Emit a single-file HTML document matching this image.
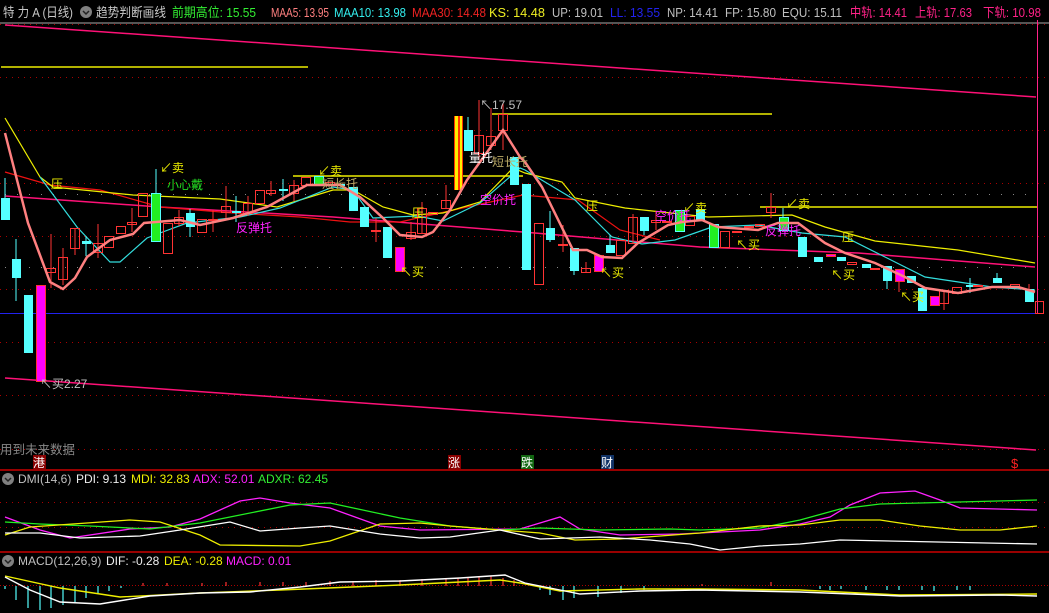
<!DOCTYPE html>
<html><head><meta charset="utf-8"><style>
html,body{margin:0;padding:0;background:#000;width:1049px;height:613px;overflow:hidden}
svg{display:block}
text{font-family:"Liberation Sans","Noto Sans CJK SC",sans-serif}
</style></head><body>
<svg width="1049" height="613" viewBox="0 0 1049 613" xmlns="http://www.w3.org/2000/svg">
<rect width="1049" height="613" fill="#000"/>
<!-- header -->
<g font-size="13">
<text x="3" y="17" fill="#c8c8c8" textLength="70" lengthAdjust="spacingAndGlyphs">特 力 A (日线)</text>
<text x="96" y="17" fill="#c8c8c8" textLength="70" lengthAdjust="spacingAndGlyphs">趋势判断画线</text>
<text x="172" y="17" fill="#33ee33" textLength="84" lengthAdjust="spacingAndGlyphs">前期高位: 15.55</text>
<text x="271" y="17" fill="#ff8080" textLength="58" lengthAdjust="spacingAndGlyphs">MAA5: 13.95</text>
<text x="334" y="17" fill="#33eeee" textLength="72" lengthAdjust="spacingAndGlyphs">MAA10: 13.98</text>
<text x="412" y="17" fill="#ee2222" textLength="74" lengthAdjust="spacingAndGlyphs">MAA30: 14.48</text>
<text x="489" y="17" fill="#eeee22" textLength="56" lengthAdjust="spacingAndGlyphs">KS: 14.48</text>
<text x="552" y="17" fill="#c0c0c0" textLength="51" lengthAdjust="spacingAndGlyphs">UP: 19.01</text>
<text x="610" y="17" fill="#2222ee" textLength="50" lengthAdjust="spacingAndGlyphs">LL: 13.55</text>
<text x="667" y="17" fill="#c0c0c0" textLength="51" lengthAdjust="spacingAndGlyphs">NP: 14.41</text>
<text x="725" y="17" fill="#c0c0c0" textLength="51" lengthAdjust="spacingAndGlyphs">FP: 15.80</text>
<text x="782" y="17" fill="#c0c0c0" textLength="60" lengthAdjust="spacingAndGlyphs">EQU: 15.11</text>
<text x="850" y="17" fill="#ff2288" textLength="57" lengthAdjust="spacingAndGlyphs">中轨: 14.41</text>
<text x="915" y="17" fill="#ff2288" textLength="57" lengthAdjust="spacingAndGlyphs">上轨: 17.63</text>
<text x="983" y="17" fill="#ff2288" textLength="58" lengthAdjust="spacingAndGlyphs">下轨: 10.98</text>
</g>
<circle cx="86" cy="12" r="6" fill="#808080"/><path d="M83 11l3 3 3-3" stroke="#222" stroke-width="1.5" fill="none"/>
<!-- main grid -->
<line x1="0" y1="23" x2="1049" y2="23" stroke="#aaa" stroke-width="1"/>
<g stroke="#a00" stroke-dasharray="1 5" stroke-width="1">
<line x1="0" y1="24.5" x2="1049" y2="24.5"/><line x1="0" y1="77.5" x2="1049" y2="77.5"/>
<line x1="0" y1="130.5" x2="1049" y2="130.5"/><line x1="0" y1="183.5" x2="1049" y2="183.5"/>
<line x1="0" y1="236.5" x2="1049" y2="236.5"/><line x1="0" y1="289.5" x2="1049" y2="289.5"/>
<line x1="0" y1="342.5" x2="1049" y2="342.5"/><line x1="0" y1="395.5" x2="1049" y2="395.5"/>
<line x1="0" y1="449.5" x2="1049" y2="449.5"/>
</g>
<g stroke="#888" stroke-dasharray="1 11" stroke-width="1">
<line x1="5" y1="194.5" x2="1049" y2="194.5"/><line x1="5" y1="267.5" x2="1049" y2="267.5"/>
</g>
<line x1="0" y1="313.5" x2="1037" y2="313.5" stroke="#2222ee"/>
<line x1="1037.5" y1="20" x2="1037.5" y2="313" stroke="#ff2288"/>
<!-- channel -->
<g stroke="#ff1177" stroke-width="1.5" fill="none">
<line x1="5" y1="25" x2="1036" y2="97"/>
<polyline points="5,196 160,207 333,217 523,232 700,247 858,253 1035,267"/>
<line x1="5" y1="378" x2="1036" y2="450"/>
</g>
<g stroke="#eeee00" stroke-width="1.5">
<line x1="1" y1="67" x2="308" y2="67"/>
<line x1="492" y1="114" x2="772" y2="114"/>
<line x1="293" y1="176" x2="523" y2="176"/>
<line x1="760" y1="207" x2="1037" y2="207"/>
</g>
<polyline fill="none" stroke="#ee1111" stroke-width="1.2" points="5,172 50,185 100,190 160,207 233,213 300,217 350,222 400,222 467,207 523,195 578,200 620,230 660,240"/>
<polyline fill="none" stroke="#eeee00" stroke-width="1.2" points="5,118 40,177 53,187 133,195 220,199 277,207 333,190 353,190 383,207 413,215 443,213 480,202 513,168 525,173 562,182 575,198 625,208 708,217 792,215 825,227 875,241 958,250 1035,263"/>
<polyline fill="none" stroke="#33dddd" stroke-width="1.2" points="40,177 77,227 110,262 120,262 147,238 160,233 187,223 240,217 280,208 333,187 353,190 373,218 417,216 443,221 480,203 520,168 525,170 575,200 612,237 642,244 675,240 712,227 758,225 802,233 845,237 885,257 925,277 992,287 1035,290"/>
<g stroke-width="1">
<g stroke="#ff3333">
<line x1="51" y1="234" x2="51" y2="288"/><line x1="63" y1="248" x2="63" y2="285"/><line x1="75" y1="228" x2="75" y2="255"/>
<line x1="98" y1="224" x2="98" y2="258"/><line x1="132" y1="208" x2="132" y2="232"/><line x1="179" y1="210" x2="179" y2="226"/>
<line x1="213" y1="210" x2="213" y2="232"/><line x1="226" y1="186" x2="226" y2="218"/><line x1="248" y1="196" x2="248" y2="216"/>
<line x1="271" y1="181" x2="271" y2="196"/><line x1="294" y1="180" x2="294" y2="201"/><line x1="376" y1="218" x2="376" y2="242"/>
<line x1="411" y1="222" x2="411" y2="240"/><line x1="422" y1="202" x2="422" y2="233"/><line x1="446" y1="185" x2="446" y2="208"/>
<line x1="479" y1="100" x2="479" y2="160"/><line x1="491" y1="108" x2="491" y2="150"/><line x1="503" y1="103" x2="503" y2="150"/>
<line x1="563" y1="225" x2="563" y2="252"/><line x1="586" y1="262" x2="586" y2="272"/><line x1="633" y1="214" x2="633" y2="243"/>
<line x1="656" y1="211" x2="656" y2="230"/><line x1="771" y1="193" x2="771" y2="218"/><line x1="899" y1="269" x2="899" y2="292"/>
<line x1="944" y1="290" x2="944" y2="310"/><line x1="1029" y1="284" x2="1029" y2="290"/>
</g>
<g stroke="#55ffff">
<line x1="5" y1="178" x2="5" y2="198"/><line x1="16" y1="239" x2="16" y2="301"/><line x1="86" y1="236" x2="86" y2="256"/>
<line x1="190" y1="209" x2="190" y2="237"/><line x1="236" y1="196" x2="236" y2="222"/><line x1="283" y1="179" x2="283" y2="201"/>
<line x1="468" y1="117" x2="468" y2="151"/><line x1="550" y1="211" x2="550" y2="242"/><line x1="574" y1="248" x2="574" y2="275"/>
<line x1="610" y1="235" x2="610" y2="253"/><line x1="644" y1="217" x2="644" y2="235"/><line x1="887" y1="266" x2="887" y2="289"/>
<line x1="997" y1="273" x2="997" y2="283"/><line x1="970" y1="278" x2="970" y2="293"/><line x1="156" y1="169" x2="156" y2="193"/><line x1="783" y1="208" x2="783" y2="217"/>
</g>
<g fill="#55ffff">
<rect x="1" y="198" width="9" height="22"/><rect x="12" y="259" width="9" height="19"/><rect x="24" y="295" width="9" height="58"/>
<rect x="82" y="241" width="9" height="3"/><rect x="186" y="213" width="9" height="14"/><rect x="232" y="211" width="9" height="2"/>
<rect x="279" y="189" width="9" height="2"/><rect x="349" y="187" width="9" height="24"/><rect x="360" y="207" width="9" height="20"/>
<rect x="383" y="227" width="9" height="31"/><rect x="464" y="130" width="9" height="21"/><rect x="510" y="157" width="9" height="28"/>
<rect x="522" y="184" width="9" height="86"/><rect x="546" y="228" width="9" height="12"/><rect x="570" y="248" width="9" height="23"/>
<rect x="606" y="245" width="9" height="8"/><rect x="640" y="217" width="9" height="14"/><rect x="696" y="209" width="9" height="12"/>
<rect x="798" y="237" width="9" height="20"/><rect x="814" y="257" width="9" height="5"/><rect x="837" y="257" width="9" height="4"/>
<rect x="862" y="264" width="9" height="4"/><rect x="883" y="266" width="9" height="15"/><rect x="907" y="276" width="9" height="7"/>
<rect x="918" y="288" width="9" height="23"/><rect x="966" y="285" width="9" height="2"/><rect x="993" y="278" width="9" height="5"/>
<rect x="1025" y="289" width="9" height="13"/><rect x="336" y="184" width="9" height="2"/>
</g>
<g fill="#ff00ff" stroke="#ff3333">
<rect x="36.5" y="285.5" width="9" height="96"/><rect x="395.5" y="247.5" width="9" height="24"/><rect x="594.5" y="255.5" width="9" height="16"/>
<rect x="826.5" y="254.5" width="9" height="2"/><rect x="895.5" y="269.5" width="9" height="12"/><rect x="930.5" y="296.5" width="9" height="9"/>
</g>
<g fill="#22ee22" stroke="#55ffff">
<rect x="151.5" y="193.5" width="9" height="48"/><rect x="314.5" y="176.5" width="9" height="9"/><rect x="675.5" y="210.5" width="9" height="21"/>
<rect x="709.5" y="224.5" width="9" height="23"/><rect x="779.5" y="217.5" width="9" height="13"/>
</g>
<g fill="none" stroke="#ff3333">
<rect x="46.5" y="268.5" width="9" height="4"/><rect x="58.5" y="257.5" width="9" height="22"/><rect x="70.5" y="228.5" width="9" height="20"/>
<rect x="93.5" y="243.5" width="9" height="9"/><rect x="104.5" y="236.5" width="9" height="11"/><rect x="116.5" y="226.5" width="9" height="7"/>
<rect x="127.5" y="222.5" width="9" height="2"/><rect x="138.5" y="193.5" width="9" height="23"/><rect x="163.5" y="223.5" width="9" height="30"/>
<rect x="174.5" y="217.5" width="9" height="6"/><rect x="197.5" y="219.5" width="9" height="13"/><rect x="208.5" y="219.5" width="9" height="1"/>
<rect x="221.5" y="206.5" width="9" height="6"/><rect x="243.5" y="203.5" width="9" height="10"/><rect x="255.5" y="190.5" width="9" height="13"/>
<rect x="266.5" y="190.5" width="9" height="3"/><rect x="289.5" y="185.5" width="9" height="8"/><rect x="301.5" y="177.5" width="9" height="8"/>
<rect x="325.5" y="182.5" width="9" height="2"/><rect x="371.5" y="230.5" width="9" height="1"/><rect x="406.5" y="232.5" width="9" height="6"/>
<rect x="417.5" y="208.5" width="9" height="25"/><rect x="428.5" y="212.5" width="9" height="2"/><rect x="441.5" y="200.5" width="9" height="8"/>
<rect x="474.5" y="135.5" width="9" height="18"/><rect x="486.5" y="136.5" width="9" height="9"/><rect x="498.5" y="114.5" width="9" height="16"/>
<rect x="534.5" y="223.5" width="9" height="61"/><rect x="558.5" y="244.5" width="9" height="1"/><rect x="581.5" y="268.5" width="9" height="4"/>
<rect x="616.5" y="240.5" width="9" height="15"/><rect x="628.5" y="217.5" width="9" height="26"/><rect x="651.5" y="220.5" width="9" height="2"/>
<rect x="662.5" y="221.5" width="9" height="1"/><rect x="685.5" y="216.5" width="9" height="9"/><rect x="720.5" y="231.5" width="9" height="16"/>
<rect x="744.5" y="226.5" width="9" height="1"/><rect x="755.5" y="224.5" width="9" height="2"/><rect x="766.5" y="207.5" width="9" height="5"/>
<rect x="847.5" y="262.5" width="9" height="2"/><rect x="870.5" y="268.5" width="9" height="1"/><rect x="939.5" y="290.5" width="9" height="13"/>
<rect x="952.5" y="287.5" width="9" height="6"/><rect x="973.5" y="285.5" width="9" height="1"/><rect x="1010.5" y="284.5" width="9" height="2"/>
<rect x="1035.5" y="301.5" width="8" height="12"/><rect x="732.5" y="231.5" width="9" height="1"/>
</g>
<rect x="454" y="116" width="9" height="74" fill="#ff3300"/><rect x="455" y="116" width="3" height="74" fill="#ffee00"/><rect x="460" y="116" width="2" height="74" fill="#ffee00"/>
</g>
<polyline fill="none" stroke="#ff8080" stroke-width="2.5" points="5,133 28,223 50,282 63,289 75,278 87,257 110,240 133,234 144,223 180,220 200,225 233,218 267,207 307,185 340,185 360,197 383,218 400,235 422,237 433,232 450,210 467,180 503,130 520,157 525,162 542,187 573,250 587,250 602,257 622,258 638,243 668,225 682,222 702,220 718,227 758,230 778,223 798,223 825,243 845,253 875,263 905,277 925,288 958,293 992,287 1018,287 1035,292"/>
<g font-size="12">
<text x="160" y="172" fill="#eeee00">↙卖</text>
<text x="167" y="189" fill="#22dd22">小心戴</text>
<text x="51" y="188" fill="#eeee00">压</text>
<text x="412" y="217" fill="#eeee00">压</text>
<text x="586" y="210" fill="#eeee00">压</text>
<text x="842" y="241" fill="#eeee00">压</text>
<text x="318" y="175" fill="#eeee00">↙卖</text>
<text x="683" y="212" fill="#eeee00">↙卖</text>
<text x="786" y="208" fill="#eeee00">↙卖</text>
<text x="400" y="276" fill="#eeee00">↖买</text>
<text x="600" y="277" fill="#eeee00">↖买</text>
<text x="736" y="249" fill="#eeee00">↖买</text>
<text x="831" y="279" fill="#eeee00">↖买</text>
<text x="900" y="301" fill="#eeee00">↖买</text>
<text x="40" y="388" fill="#c0c0c0">↖买2.27</text>
<text x="480" y="109" fill="#c0c0c0">↖17.57</text>
<text x="236" y="232" fill="#ff22ff">反弹托</text>
<text x="480" y="204" fill="#ff22ff">空价托</text>
<text x="655" y="220" fill="#ff22ff">空价托</text>
<text x="765" y="235" fill="#ff22ff">反弹托</text>
<text x="469" y="162" fill="#ffffff">量托</text>
<text x="492" y="166" fill="#bbaa66">短长托</text>
<text x="322" y="188" fill="#bbaa66">短长托</text>
<text x="0" y="454" fill="#888" font-size="12.5">用到未来数据</text>
</g>
<rect x="33" y="455" width="13" height="14" fill="#880000"/><text x="33" y="467" font-size="12" fill="#fff">港</text>
<rect x="448" y="455" width="13" height="14" fill="#880000"/><text x="448" y="467" font-size="12" fill="#fff">涨</text>
<rect x="521" y="455" width="13" height="14" fill="#116611"/><text x="521" y="467" font-size="12" fill="#fff">跌</text>
<rect x="601" y="455" width="13" height="14" fill="#113366"/><text x="601" y="467" font-size="12" fill="#fff">财</text>
<text x="1011" y="468" font-size="13" fill="#ff2222">$</text>
<line x1="0" y1="470" x2="1049" y2="470" stroke="#cc0000" stroke-width="1.5"/>
<line x1="0" y1="552" x2="1049" y2="552" stroke="#cc0000" stroke-width="1.5"/>
<circle cx="8" cy="479" r="6" fill="#808080"/><path d="M5 478l3 3 3-3" stroke="#222" stroke-width="1.5" fill="none"/>
<text y="483" font-size="12"><tspan x="18" fill="#c0c0c0">DMI(14,6)</tspan><tspan x="76" fill="#eee">PDI: 9.13</tspan><tspan x="131" fill="#eeee00">MDI: 32.83</tspan><tspan x="193" fill="#ff22ff">ADX: 52.01</tspan><tspan x="258" fill="#33ee33">ADXR: 62.45</tspan></text>
<g stroke="#a00" stroke-dasharray="1 5"><line x1="0" y1="502.5" x2="1049" y2="502.5"/><line x1="0" y1="527.5" x2="1049" y2="527.5"/></g>
<g fill="none" stroke-width="1.3">
<polyline stroke="#ff22ff" points="5,517 40,530 70,538 130,529 170,527 200,519 240,501 260,498 290,503 330,508 380,526 420,530 520,529 560,517 580,529 620,535 680,534 760,530 800,524 830,517 850,505 880,493 915,491 940,500 960,508 1037,510"/>
<polyline stroke="#22ee22" points="5,522 40,524 90,526 150,529 200,523 230,517 290,505 330,503 400,518 450,526 500,530 540,528 600,530 670,529 700,530 760,528 800,520 840,509 880,504 920,503 1037,500"/>
<polyline stroke="#eeee00" points="5,535 30,527 130,520 160,522 200,535 220,545 300,546 330,541 380,524 420,523 450,526 500,530 540,533 575,540 620,539 700,533 760,526 800,525 840,520 880,520 920,526 960,530 1000,530 1037,526"/>
<polyline stroke="#ffffff" points="5,533 40,533 80,538 140,536 180,530 230,522 260,531 300,528 330,526 380,534 420,538 450,537 500,530 540,539 600,537 650,540 690,544 720,550 760,546 800,544 840,540 1037,544"/>
</g>
<circle cx="8" cy="561" r="6" fill="#808080"/><path d="M5 560l3 3 3-3" stroke="#222" stroke-width="1.5" fill="none"/>
<text y="565" font-size="12"><tspan x="18" fill="#c0c0c0">MACD(12,26,9)</tspan><tspan x="106" fill="#eee">DIF: -0.28</tspan><tspan x="164" fill="#eeee00">DEA: -0.28</tspan><tspan x="226" fill="#ff22ff">MACD: 0.01</tspan></text>
<line x1="0" y1="585.5" x2="1049" y2="585.5" stroke="#a00" stroke-dasharray="1 2"/>
<g stroke="#55ffff" stroke-width="1.2">
<line x1="5" y1="586" x2="5" y2="589"/><line x1="16" y1="586" x2="16" y2="600"/><line x1="28" y1="586" x2="28" y2="608"/>
<line x1="40" y1="586" x2="40" y2="610"/><line x1="51" y1="586" x2="51" y2="608"/><line x1="63" y1="586" x2="63" y2="605"/>
<line x1="75" y1="586" x2="75" y2="602"/><line x1="86" y1="586" x2="86" y2="598"/><line x1="98" y1="586" x2="98" y2="594"/>
<line x1="109" y1="586" x2="109" y2="591"/><line x1="121" y1="586" x2="121" y2="588"/>
<line x1="540" y1="586" x2="540" y2="590"/><line x1="550" y1="586" x2="550" y2="595"/><line x1="563" y1="586" x2="563" y2="600"/>
<line x1="574" y1="586" x2="574" y2="598"/><line x1="598" y1="586" x2="598" y2="597"/><line x1="621" y1="586" x2="621" y2="593"/>
<line x1="644" y1="586" x2="644" y2="590"/><line x1="820" y1="586" x2="820" y2="589"/><line x1="830" y1="586" x2="830" y2="590"/>
<line x1="841" y1="586" x2="841" y2="589"/><line x1="866" y1="586" x2="866" y2="590"/><line x1="887" y1="586" x2="887" y2="590"/>
<line x1="899" y1="586" x2="899" y2="590"/><line x1="922" y1="586" x2="922" y2="590"/><line x1="934" y1="586" x2="934" y2="591"/>
<line x1="957" y1="586" x2="957" y2="590"/><line x1="970" y1="586" x2="970" y2="590"/>
</g>
<g stroke="#ff3333" stroke-width="1.2">
<line x1="143" y1="586" x2="143" y2="583"/><line x1="167" y1="586" x2="167" y2="583"/><line x1="202" y1="586" x2="202" y2="583"/>
<line x1="226" y1="586" x2="226" y2="582"/><line x1="260" y1="586" x2="260" y2="582"/><line x1="283" y1="586" x2="283" y2="582"/>
<line x1="306" y1="586" x2="306" y2="582"/><line x1="330" y1="586" x2="330" y2="581"/><line x1="353" y1="586" x2="353" y2="581"/>
<line x1="376" y1="586" x2="376" y2="580"/><line x1="400" y1="586" x2="400" y2="580"/><line x1="422" y1="586" x2="422" y2="579"/>
<line x1="446" y1="586" x2="446" y2="578"/><line x1="458" y1="586" x2="458" y2="578"/><line x1="468" y1="586" x2="468" y2="577"/>
<line x1="479" y1="586" x2="479" y2="576"/><line x1="491" y1="586" x2="491" y2="576"/><line x1="503" y1="586" x2="503" y2="578"/>
<line x1="514" y1="586" x2="514" y2="580"/><line x1="702" y1="586" x2="702" y2="584"/><line x1="771" y1="586" x2="771" y2="582"/>
</g>
<g fill="none" stroke-width="1.4">
<polyline stroke="#eeee00" points="5,576 60,588 120,597 200,593 280,590 400,585 500,580 520,583 560,591 640,589 700,589 800,590 900,595 1037,594"/>
<polyline stroke="#ffffff" points="5,577 30,590 60,602 100,604 150,596 200,593 250,592 300,587 340,582 400,581 460,578 505,575 525,583 560,590 580,594 640,591 700,590 800,592 900,596 1000,595 1037,596"/>
</g>
</svg>
</body></html>
